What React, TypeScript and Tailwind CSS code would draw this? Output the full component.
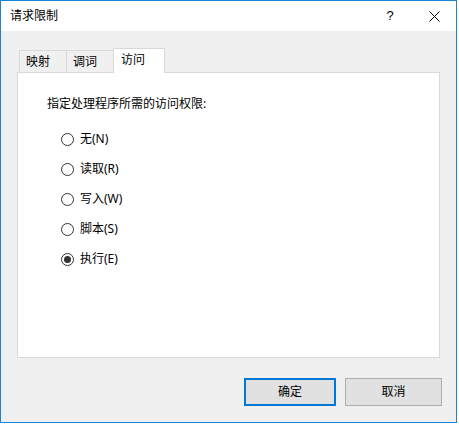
import { useState } from "react"

const options = [
  { id: "none", label: "无(N)" },
  { id: "read", label: "读取(R)" },
  { id: "write", label: "写入(W)" },
  { id: "script", label: "脚本(S)" },
  { id: "execute", label: "执行(E)" },
]

function Radio({ checked }: { checked: boolean }) {
  return (
    <svg width="13" height="13" viewBox="0 0 13 13" className="shrink-0">
      <circle cx="6.5" cy="6.5" r="6" fill="white" stroke="#333333" strokeWidth="1" />
      {checked && <circle cx="6.5" cy="6.5" r="3.5" fill="#333333" />}
    </svg>
  )
}

export default function App() {
  const [access, setAccess] = useState("execute")
  const font = { fontFamily: '"Noto Sans", "Noto Sans CJK SC", sans-serif' }

  return (
    <div className="w-[459px] h-[425px] bg-white text-[12px] text-black" style={font}>
      <div className="w-[457px] h-[423px] border border-[#1883d7] bg-[#f0f0f0] flex flex-col">
        {/* title bar */}
        <div className="h-[30px] bg-white flex items-center shrink-0">
          <span className="pl-[9px] leading-[18px]">请求限制</span>
          <div className="ml-auto flex items-center h-full">
            <div className="w-[44px] h-full flex items-center justify-center text-[13px]" style={{ fontFamily: '"Liberation Sans", sans-serif' }}>
              ?
            </div>
            <div className="w-[44px] h-full flex items-center justify-center">
              <svg width="11" height="11" viewBox="0 0 11 11">
                <path d="M0.5 0.5 L10.5 10.5 M10.5 0.5 L0.5 10.5" stroke="#000" strokeWidth="1" />
              </svg>
            </div>
          </div>
        </div>

        {/* tabs */}
        <div className="pt-[17px] pl-[16px]">
          <div className="flex items-end pl-[2px]">
            <div className="w-[48px] h-[22px] border border-b-0 border-[#d9d9d9] pl-[6px] pt-[2px] leading-[18px]">映射</div>
            <div className="w-[48px] h-[22px] -ml-px border border-b-0 border-[#d9d9d9] pl-[6px] pt-[2px] leading-[18px]">调词</div>
            <div className="relative z-10 w-[52px] h-[25px] -ml-px -mb-px border border-b-0 border-[#d9d9d9] bg-white pl-[7px] pt-[2px] leading-[18px]">
              访问
            </div>
          </div>
          <div className="w-[423px] h-[286px] border border-[#d9d9d9] bg-white pl-[29px] pt-[22px]">
            <div className="leading-[18px]">指定处理程序所需的访问权限:</div>
            <div className="mt-[11px] pl-[14px] flex flex-col">
              {options.map((o) => (
                <div
                  key={o.id}
                  className="h-[30px] flex items-center cursor-default"
                  onClick={() => setAccess(o.id)}
                >
                  <Radio checked={access === o.id} />
                  <span className="ml-[6px] leading-[18px]">{o.label}</span>
                </div>
              ))}
            </div>
          </div>
        </div>

        {/* buttons */}
        <div className="mt-[20px] flex justify-end pr-[14px] gap-[9px]">
          <button className="w-[92px] h-[28px] border-2 border-[#0078d7] bg-[#e1e1e1] leading-[18px]">确定</button>
          <button className="w-[97px] h-[28px] border border-[#adadad] bg-[#e1e1e1] leading-[18px]">取消</button>
        </div>
      </div>
    </div>
  )
}
